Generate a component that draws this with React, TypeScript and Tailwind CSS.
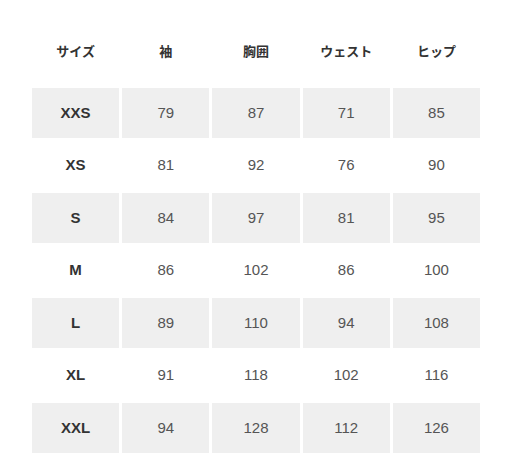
const headers = ["サイズ", "袖", "胸囲", "ウェスト", "ヒップ"];

const rows: [string, number, number, number, number][] = [
  ["XXS", 79, 87, 71, 85],
  ["XS", 81, 92, 76, 90],
  ["S", 84, 97, 81, 95],
  ["M", 86, 102, 86, 100],
  ["L", 89, 110, 94, 108],
  ["XL", 91, 118, 102, 116],
  ["XXL", 94, 128, 112, 126],
];

export default function App() {
  return (
    <div
      className="w-[512px] h-[473px] bg-white px-[32px] pt-[27px]"
      style={{ fontFamily: '"Liberation Sans", "Noto Sans CJK JP", sans-serif' }}
    >
      <div className="grid grid-cols-5 gap-x-[3px] h-[50px] items-center mb-[11px]">
        {headers.map((h) => (
          <div key={h} className="text-center text-[13px] font-bold text-[#333]">
            {h}
          </div>
        ))}
      </div>
      <div className="flex flex-col gap-[3px]">
        {rows.map((r, i) => (
          <div key={r[0]} className="grid grid-cols-5 gap-x-[3px] h-[49.5px]">
            {r.map((v, j) => (
              <div
                key={j}
                className={`flex items-center justify-center text-[15px] ${
                  i % 2 === 0 ? "bg-[#efefef]" : ""
                } ${j === 0 ? "font-bold text-[#333]" : "text-[#555]"}`}
              >
                {v}
              </div>
            ))}
          </div>
        ))}
      </div>
    </div>
  );
}
